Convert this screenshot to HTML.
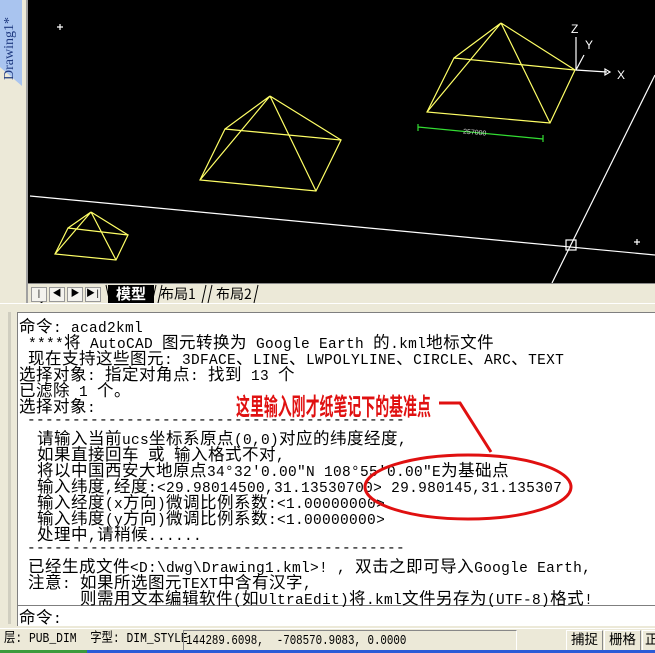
<!DOCTYPE html>
<html><head><meta charset="utf-8"><style>
*{margin:0;padding:0;box-sizing:border-box}
body{width:655px;height:653px;overflow:hidden;background:#ece9d8;position:relative;font-family:"Liberation Mono","Noto Sans CJK SC",monospace}
.abs{position:absolute}
#left{left:0;top:0;width:28px;height:303px;background:#ece9d8;border-right:2px solid #a0a0a0}
#tab{left:0;top:0;width:22px;height:86px;background:#a9c4ef;clip-path:polygon(0 0,100% 0,100% 100%,0 78%);}
#tabtxt{left:2px;top:80px;transform:rotate(-90deg);transform-origin:0 0;font:14px "Liberation Serif",serif;color:#1f3a80;white-space:nowrap}
#draw{left:28px;top:0;width:627px;height:283px;background:#000}
#tabbar{left:28px;top:283px;width:627px;height:20px;background:#ece9d8;border-top:1px solid #888}
.nb{position:absolute;top:3px;width:16px;height:15px;border:1px solid #999;background:#f4f3ee;font-size:9px;line-height:13px;text-align:center;color:#000}
#cmd{left:17px;top:312px;width:638px;height:294px;background:#fff;border:1px solid #7f7f7f;border-right:none}
#cmdline{left:17px;top:606px;width:638px;height:20px;background:#fff;border-left:1px solid #7f7f7f}
.ln{position:absolute;font-size:14.5px;line-height:16px;white-space:pre;color:#000;letter-spacing:0.3px}
.ln .c{font-size:16.5px;line-height:16px;font-family:"Noto Sans CJK SC",sans-serif;letter-spacing:0.5px}
#status{left:0;top:628px;width:655px;height:25px;background:#ece9d8;border-top:1px solid #fff;font-size:13.5px;line-height:22px;white-space:pre}
.sq{display:inline-block;transform-origin:0 0}
</style></head><body>
<div id="left" class="abs"></div>
<div id="tab" class="abs"></div>
<div id="tabtxt" class="abs">Drawing1*</div>
<div id="draw" class="abs">
<svg width="627" height="283" viewBox="28 0 627 283" style="position:absolute;left:0;top:0">
<g stroke="#ffff66" stroke-width="1.2" fill="none">
<polygon points="454,58 575,70 550,123 427,112"/>
<path d="M501,23L454,58M501,23L575,70M501,23L550,123M501,23L427,112"/>
<polygon points="225,129 341,140 316,191 200,180"/>
<path d="M270,96L225,129M270,96L341,140M270,96L316,191M270,96L200,180"/>
<polygon points="68,228 128,235 116,260 55,254"/>
<path d="M91,212L68,228M91,212L128,235M91,212L116,260M91,212L55,254"/>
</g>
<g stroke="#33dd33" stroke-width="1.2"><path d="M418,127L543,139M418,124v7M543,135v7"/></g>
<text x="463" y="135" fill="#ccc" font-size="7" font-family="Liberation Sans" transform="rotate(5 480 133)">257000</text>
<g stroke="#fff" stroke-width="1.2" fill="none">
<path d="M30,196L655,255"/>
<path d="M655,75L552,283"/>
<rect x="566" y="240" width="10" height="10"/>
<path d="M576,37V70L607,72M576,70L584,55"/>
<path d="M57,27h6M60,24v6M634,242h6M637,239v6"/>
<path d="M605,69l5,3l-5,3z"/>
</g>
<g fill="#fff" font-family="Liberation Sans" font-size="12"><text x="571" y="33">Z</text><text x="585" y="49">Y</text><text x="617" y="79">X</text></g>
</svg>
</div>
<div id="tabbar" class="abs">
<div class="nb" style="left:3px">|◀</div><div class="nb" style="left:21px">◀</div><div class="nb" style="left:39px">▶</div><div class="nb" style="left:57px">▶|</div>
<div class="abs" style="left:80px;top:1px;width:46px;height:18px;background:#000;color:#fff;font:bold 15px 'Noto Sans CJK SC',sans-serif;line-height:18px;text-align:center">模型</div>
<div class="abs" style="left:132px;top:1px;font:14px 'Noto Sans CJK SC',sans-serif;line-height:18px">布局1</div>
<div class="abs" style="left:188px;top:1px;font:14px 'Noto Sans CJK SC',sans-serif;line-height:18px">布局2</div>
<svg class="abs" style="left:0;top:0" width="250" height="20"><g stroke="#000" fill="none"><path d="M78,1L82,19M128,1L124,19M134,1L130,19M178,1L174,19M184,1L180,19M230,1L226,19"/></g></svg>
</div>
<div class="abs" style="left:0;top:303px;width:655px;height:9px;background:#ece9d8;border-top:1px solid #fff"></div>
<div class="abs" style="left:8px;top:312px;width:3px;height:312px;background:#d0cec0"></div>
<div id="cmd" class="abs"></div>
<div id="cmdline" class="abs"></div>
<div id="lines">
<div class="ln" style="left:19px;top:317px">命令: acad2kml</div>
<div class="ln" style="left:19px;top:333px"> ****将 AutoCAD 图元转换为 Google Earth 的.kml地标文件</div>
<div class="ln" style="left:19px;top:349px"> 现在支持这些图元: 3DFACE、LINE、LWPOLYLINE、CIRCLE、ARC、TEXT</div>
<div class="ln" style="left:19px;top:365px">选择对象: 指定对角点: 找到 13 个</div>
<div class="ln" style="left:19px;top:381px">已滤除 1 个。</div>
<div class="ln" style="left:19px;top:397px">选择对象:</div>
<div class="ln" style="left:27px;top:413px">------------------------------------------</div>
<div class="ln" style="left:19px;top:429px">  请输入当前ucs坐标系原点(0,0)对应的纬度经度,</div>
<div class="ln" style="left:19px;top:445px">  如果直接回车 或 输入格式不对,</div>
<div class="ln" style="left:19px;top:461px">  将以中国西安大地原点34°32'0.00"N 108°55'0.00"E为基础点</div>
<div class="ln" style="left:19px;top:477px">  输入纬度,经度:&lt;29.98014500,31.13530700&gt; 29.980145,31.135307</div>
<div class="ln" style="left:19px;top:493px">  输入经度(x方向)微调比例系数:&lt;1.00000000&gt;</div>
<div class="ln" style="left:19px;top:509px">  输入纬度(y方向)微调比例系数:&lt;1.00000000&gt;</div>
<div class="ln" style="left:19px;top:525px">  处理中,请稍候......</div>
<div class="ln" style="left:27px;top:541px">------------------------------------------</div>
<div class="ln" style="left:19px;top:557px"> 已经生成文件&lt;D:\dwg\Drawing1.kml&gt;! , 双击之即可导入Google Earth,</div>
<div class="ln" style="left:19px;top:573px"> 注意: 如果所选图元TEXT中含有汉字,</div>
<div class="ln" style="left:80px;top:589px">则需用文本编辑软件(如UltraEdit)将.kml文件另存为(UTF-8)格式!</div>
<div class="ln" style="left:19px;top:608px">命令:</div>
</div>
<div class="abs" style="left:236px;top:390px;color:#e01010;font:bold 24px 'Noto Sans CJK SC',sans-serif;line-height:30px;transform:scaleX(0.58);transform-origin:0 0;white-space:nowrap">这里输入刚才纸笔记下的基准点</div>
<svg class="abs" style="left:0;top:0" width="655" height="653">
<g stroke="#e01010" stroke-width="3" fill="none">
<path d="M439,403H460L491,452"/>
<ellipse cx="468" cy="487" rx="103" ry="32"/>
</g></svg>
<div id="status" class="abs">
<span class="abs sq" style="left:4px;top:0;transform:scaleX(0.84)">层: PUB_DIM  字型: DIM_STYLE</span>
<div class="abs" style="left:183px;top:1px;width:334px;height:21px;border:1px solid;border-color:#888 #fff #fff #888;padding-left:2px"><span class="sq" style="transform:scaleX(0.8)">144289.6098,  -708570.9083, 0.0000</span></div>
<div class="abs" style="left:566px;top:1px;width:37px;height:21px;border:1px solid;border-color:#fff #888 #888 #fff;text-align:center">捕捉</div>
<div class="abs" style="left:604px;top:1px;width:37px;height:21px;border:1px solid;border-color:#fff #888 #888 #fff;text-align:center">栅格</div>
<div class="abs" style="left:642px;top:1px;width:20px;height:21px;border:1px solid;border-color:#fff #888 #888 #fff;padding-left:2px">正</div>
</div>
<div class="abs" style="left:0;top:650px;width:87px;height:3px;background:#3c9a3c"></div>
<div class="abs" style="left:87px;top:650px;width:568px;height:3px;background:#2a5bd7"></div>
<script>
document.querySelectorAll('#lines .ln').forEach(function(el){
el.innerHTML=el.innerHTML.replace(/([\u3000-\u9fff\uff00-\uffef]+)/g,'<span class="c">$1</span>');
});
</script>
</body></html>
